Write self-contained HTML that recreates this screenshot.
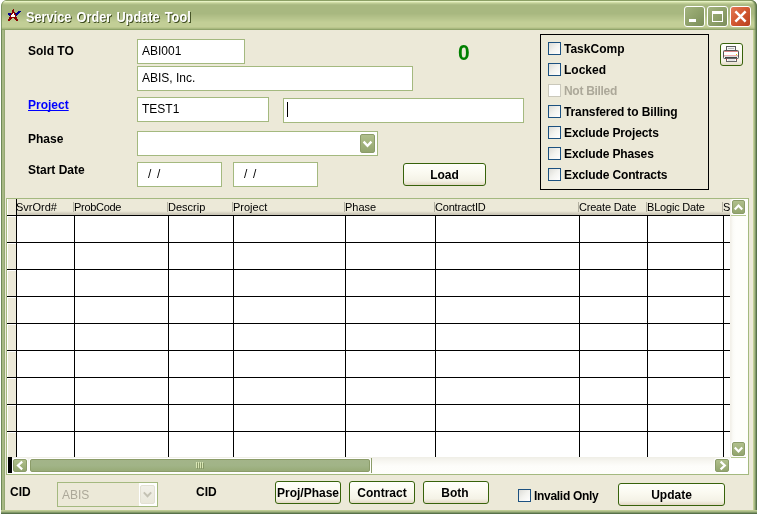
<!DOCTYPE html>
<html>
<head>
<meta charset="utf-8">
<title>Service Order Update Tool</title>
<style>
html,body{margin:0;padding:0;background:#fff;}
body{width:758px;height:514px;overflow:hidden;position:relative;font-family:"Liberation Sans",sans-serif;font-size:11px;color:#000;}
.a{position:absolute;box-sizing:border-box;}
.win{left:1px;top:0;width:756px;height:514px;border-radius:6px 6px 0 0;overflow:hidden;background:#a8b882;}
.title{left:0;top:0;width:756px;height:30px;border-radius:6px 6px 0 0;box-shadow:inset -1px 0 0 0 rgba(88,113,74,0.95),inset -2px 0 0 0 rgba(110,135,85,0.75),inset -3px 0 0 0 rgba(140,160,105,0.5),inset 1px 0 0 0 rgba(110,136,88,0.75);background:linear-gradient(to bottom,#8ca066 0px,#8ca066 1px,#e6f2c4 1px,#e6f2c4 2px,#d0dca6 2px,#d0dca6 3px,#bccb93 3px,#bccb93 4px,#aebd87 4px,#aebd87 5px,#a8b880 5px,#a8b880 6px,#a8b880 6px,#a8b880 7px,#a8b880 7px,#a8b880 8px,#a8b880 8px,#a8b880 9px,#a8b880 9px,#a8b880 10px,#a8b880 10px,#a8b880 11px,#a8b880 11px,#a8b880 12px,#a8b880 12px,#a8b880 13px,#a8b880 13px,#a8b880 14px,#abba82 14px,#abba82 15px,#aebd85 15px,#aebd85 16px,#b1bf87 16px,#b1bf87 17px,#b4c28a 17px,#b4c28a 18px,#b6c48c 18px,#b6c48c 19px,#b9c78f 19px,#b9c78f 20px,#bcc991 20px,#bcc991 21px,#bfcc94 21px,#bfcc94 22px,#c2ce96 22px,#c2ce96 23px,#c2ce96 23px,#c2ce96 24px,#c2ce96 24px,#c2ce96 25px,#c2ce96 25px,#c2ce96 26px,#c2ce96 26px,#c2ce96 27px,#bac68d 27px,#bac68d 28px,#a9b980 28px,#a9b980 29px,#90a36a 29px,#90a36a 30px);}
.ttext{left:25px;top:8px;font-weight:bold;font-size:14px;line-height:18px;color:#fff;text-shadow:1px 1px 0 #3c4a1e;white-space:nowrap;transform-origin:0 0;transform:scaleX(0.912);word-spacing:1.7px;}
.bl{left:0;top:30px;width:4px;height:484px;background:linear-gradient(to right,#6e8858 0,#6e8858 1px,#a7b884 1px,#a7b884 3px,#94a873 3px,#94a873 4px);}
.br{left:752px;top:30px;width:4px;height:484px;background:linear-gradient(to right,#c3d198 0,#c3d198 1px,#a7b884 1px,#a7b884 2px,#819868 2px,#819868 3px,#58714a 3px,#58714a 4px);}
.bb{left:0;top:510px;width:756px;height:4px;background:linear-gradient(to bottom,#bdcb93 0,#bdcb93 1px,#a7b884 1px,#a7b884 2px,#819868 2px,#819868 3px,#58714a 3px,#58714a 4px);}
.client{left:4px;top:30px;width:748px;height:480px;background:#ece9d8;}
.lb{font-weight:bold;font-size:12px;line-height:14px;white-space:nowrap;}
.fld{background:#fff;border:1px solid #a4b97f;font-size:12px;line-height:14px;white-space:nowrap;overflow:hidden;}
.fld span{position:absolute;left:4px;top:4px;}
.btn{border:1px solid #37620a;border-radius:3px;background:linear-gradient(to bottom,#fffffb 0,#fbfaf1 40%,#f4f2e6 80%,#ece6d6 90%,#e2d8c4 100%);font-weight:bold;font-size:12px;line-height:14px;text-align:center;white-space:nowrap;}
.cb{width:13px;height:13px;border:1px solid #1c5180;background:linear-gradient(135deg,#dcdcd7 0,#f3f3ef 50%,#ffffff 100%);}
.cbd{width:13px;height:13px;border:1px solid #cac8bb;background:#fff;}
.sbtn{border:1px solid #8b9c69;border-radius:2px;background:linear-gradient(to bottom,#b0bf8c 0,#a3b47e 45%,#93a56f 100%);box-shadow:0 0 0 1px #fff;}
.sthumb{border:1px solid #8b9c69;border-radius:2px;background:linear-gradient(to bottom,#a3b489 0,#a1b487 50%,#98ab78 100%);box-shadow:0 0 0 1px #fff;}
.tb{width:21px;height:21px;border:1px solid #fff;border-radius:3px;background:linear-gradient(135deg,#a3b37f 0,#93a56e 40%,#7c8e5a 100%);}
.tbx{background:linear-gradient(135deg,#e27a58 0,#d45a32 45%,#b8401e 100%);}
</style>
</head>
<body>
<div class="a win" style="will-change:transform;">
 <div class="a title"></div>
 <div class="a bl"></div><div class="a br"></div><div class="a bb"></div>
 <div class="a ttext" id="tt">Service Order Update Tool</div>
 <div class="a client" id="client"></div>
</div>
<div class="a" id="ui" style="left:0;top:0;width:758px;height:514px;will-change:transform;">
<!-- title buttons -->
<div class="a tb" style="left:684px;top:6px;"><div class="a" style="left:4px;top:12px;width:7px;height:3px;background:#fff;"></div></div>
<div class="a tb" style="left:707px;top:6px;"><div class="a" style="left:4px;top:4px;width:11px;height:11px;border:1px solid #fff;border-top-width:3px;"></div></div>
<div class="a tb tbx" style="left:730px;top:6px;"><svg class="a" style="left:0;top:0" width="19" height="19" viewBox="0 0 19 19"><path d="M4.4 4.4 L14.6 14.6 M14.6 4.4 L4.4 14.6" stroke="#fff" stroke-width="2.5" fill="none"/></svg></div>
<!-- icon -->
<svg class="a" style="left:6px;top:7px" width="18" height="16" viewBox="6 7 18 16" shape-rendering="crispEdges"><rect x="13" y="9" width="1" height="1" fill="#8b0000"/><rect x="12" y="10" width="2" height="1" fill="#8b0000"/><rect x="12" y="11" width="2" height="1" fill="#8b0000"/><rect x="18" y="11" width="3" height="1" fill="#00008c"/><rect x="12" y="12" width="3" height="1" fill="#8b0000"/><rect x="17" y="12" width="3" height="1" fill="#00008c"/><rect x="8" y="13" width="3" height="1" fill="#00008c"/><rect x="11" y="13" width="2" height="1" fill="#8b0000"/><rect x="13" y="13" width="1" height="1" fill="#ffffff"/><rect x="14" y="13" width="1" height="1" fill="#8b0000"/><rect x="15" y="13" width="4" height="1" fill="#00008c"/><rect x="8" y="14" width="3" height="1" fill="#00008c"/><rect x="11" y="14" width="1" height="1" fill="#8b0000"/><rect x="12" y="14" width="2" height="1" fill="#ffffff"/><rect x="14" y="14" width="2" height="1" fill="#8b0000"/><rect x="16" y="14" width="2" height="1" fill="#00008c"/><rect x="9" y="15" width="1" height="1" fill="#00008c"/><rect x="10" y="15" width="1" height="1" fill="#8b0000"/><rect x="11" y="15" width="4" height="1" fill="#ffffff"/><rect x="15" y="15" width="1" height="1" fill="#8b0000"/><rect x="16" y="15" width="1" height="1" fill="#00008c"/><rect x="10" y="16" width="1" height="1" fill="#8b0000"/><rect x="11" y="16" width="4" height="1" fill="#ffffff"/><rect x="15" y="16" width="1" height="1" fill="#8b0000"/><rect x="9" y="17" width="8" height="1" fill="#8b0000"/><rect x="9" y="18" width="3" height="1" fill="#8b0000"/><rect x="14" y="18" width="3" height="1" fill="#8b0000"/><rect x="8" y="19" width="3" height="1" fill="#8b0000"/><rect x="15" y="19" width="3" height="1" fill="#8b0000"/><rect x="8" y="20" width="2" height="1" fill="#8b0000"/><rect x="16" y="20" width="2" height="1" fill="#8b0000"/></svg>
<!-- labels -->
<div class="a lb" style="left:28px;top:44px;">Sold TO</div>
<div class="a lb" style="left:28px;top:98px;color:#0000ff;text-decoration:underline;text-decoration-skip-ink:none;">Project</div>
<div class="a lb" style="left:28px;top:132px;">Phase</div>
<div class="a lb" style="left:28px;top:163px;">Start Date</div>
<!-- fields -->
<div class="a fld" style="left:137px;top:39px;width:108px;height:25px;"><span>ABI001</span></div>
<div class="a fld" style="left:137px;top:66px;width:276px;height:25px;"><span>ABIS, Inc.</span></div>
<div class="a fld" style="left:137px;top:97px;width:132px;height:25px;"><span>TEST1</span></div>
<div class="a fld" style="left:283px;top:98px;width:241px;height:25px;"><div class="a" style="left:3px;top:3px;width:1px;height:15px;background:#000;"></div></div>
<div class="a fld" style="left:137px;top:131px;width:241px;height:25px;"><div class="a sbtn" style="left:222px;top:2px;width:15px;height:19px;box-shadow:none;border-radius:2px;"><svg class="a" style="left:0;top:0" width="13" height="17" viewBox="0 0 13 17"><path d="M2.6 6.6 L6.5 10.8 L10.4 6.6" stroke="#fff" stroke-width="2.3" fill="none"/></svg></div></div>
<div class="a fld" style="left:137px;top:162px;width:85px;height:25px;"><span style="left:10px;">/</span><span style="left:19px;">/</span></div>
<div class="a fld" style="left:233px;top:162px;width:85px;height:25px;"><span style="left:10px;">/</span><span style="left:19px;">/</span></div>
<div class="a" style="left:458px;top:40px;font-weight:bold;font-size:21px;line-height:24px;transform:scaleY(1.07);transform-origin:0 5px;color:#008000;">0</div>
<div class="a btn" style="left:403px;top:163px;width:83px;height:23px;padding-top:4px;">Load</div>
<!-- group box -->
<div class="a" style="left:540px;top:34px;width:169px;height:156px;border:1px solid #000;"></div>
<!-- checkboxes -->
<div class="a cb" style="left:548px;top:42px;"></div><div class="a lb" style="left:564px;top:42px;letter-spacing:0;">TaskComp</div>
<div class="a cb" style="left:548px;top:63px;"></div><div class="a lb" style="left:564px;top:63px;letter-spacing:0;">Locked</div>
<div class="a cbd" style="left:548px;top:84px;"></div><div class="a lb" style="left:564px;top:84px;color:#aca899;letter-spacing:-0.3px;">Not Billed</div>
<div class="a cb" style="left:548px;top:105px;"></div><div class="a lb" style="left:564px;top:105px;letter-spacing:-0.12px;">Transfered to Billing</div>
<div class="a cb" style="left:548px;top:126px;"></div><div class="a lb" style="left:564px;top:126px;letter-spacing:-0.12px;">Exclude Projects</div>
<div class="a cb" style="left:548px;top:147px;"></div><div class="a lb" style="left:564px;top:147px;letter-spacing:-0.12px;">Exclude Phases</div>
<div class="a cb" style="left:548px;top:168px;"></div><div class="a lb" style="left:564px;top:168px;letter-spacing:-0.12px;">Exclude Contracts</div>
<div class="a btn" id="prn" style="left:720px;top:43px;width:23px;height:23px;"><svg class="a" style="left:-1px;top:-1px" width="23" height="23" viewBox="720 43 23 23">
<rect x="726.5" y="46.5" width="9" height="4.5" fill="#f4f4f4" stroke="#5a5a5a" stroke-width="1"/>
<rect x="728" y="48" width="6" height="1" fill="#b8b8b8"/>
<rect x="723.5" y="50.5" width="15" height="8" rx="1" fill="#f6f6f6" stroke="#555" stroke-width="1"/>
<rect x="724" y="51" width="14" height="1" fill="#d88"/>
<rect x="724" y="52" width="14" height="3" fill="#fff"/>
<rect x="724" y="55" width="14" height="1" fill="#f0b0b0"/>
<rect x="724" y="56" width="14" height="1" fill="#ddd"/>
<rect x="725" y="57" width="12" height="1" fill="#444"/>
<rect x="736" y="54" width="1" height="1" fill="#e8c800"/>
<rect x="726.5" y="58.5" width="10" height="3" fill="#fff" stroke="#666" stroke-width="1"/>
<rect x="728" y="59.5" width="7" height="1" fill="#ccc"/>
<rect x="726" y="59" width="1" height="1" fill="#a33"/><rect x="736" y="59" width="1" height="1" fill="#a33"/>
</svg></div>
<!-- grid -->
<div class="a" id="grid" style="left:6px;top:198px;width:743px;height:277px;border:1px solid #a4b97f;background:#fff;overflow:hidden;">
<div class="a" style="left:0;top:0;width:723px;height:16px;background:linear-gradient(to bottom,#ece9d8 0,#ece9d8 12px,#e2decd 13px,#d6d2c2 14px,#cbc7b8 15px,#cbc7b8 16px);"></div>
<div class="a" style="left:0;top:0;width:9px;height:258px;background:#ece9d8;border-left:1px solid #fff;"></div>
<div class="a" style="left:9px;top:2px;font-size:11px;line-height:13px;white-space:nowrap;">SvrOrd#</div><div class="a" style="left:9px;top:0;width:1px;height:258px;background:#000;"></div>
<div class="a" style="left:67px;top:2px;font-size:11px;line-height:13px;white-space:nowrap;letter-spacing:-0.3px;">ProbCode</div><div class="a" style="left:66px;top:3px;width:1px;height:10px;background:#b5b2a2;"></div><div class="a" style="left:67px;top:17px;width:1px;height:241px;background:#000;"></div>
<div class="a" style="left:161px;top:2px;font-size:11px;line-height:13px;white-space:nowrap;">Descrip</div><div class="a" style="left:160px;top:3px;width:1px;height:10px;background:#b5b2a2;"></div><div class="a" style="left:161px;top:17px;width:1px;height:241px;background:#000;"></div>
<div class="a" style="left:226px;top:2px;font-size:11px;line-height:13px;white-space:nowrap;">Project</div><div class="a" style="left:225px;top:3px;width:1px;height:10px;background:#b5b2a2;"></div><div class="a" style="left:226px;top:17px;width:1px;height:241px;background:#000;"></div>
<div class="a" style="left:338px;top:2px;font-size:11px;line-height:13px;white-space:nowrap;">Phase</div><div class="a" style="left:337px;top:3px;width:1px;height:10px;background:#b5b2a2;"></div><div class="a" style="left:338px;top:17px;width:1px;height:241px;background:#000;"></div>
<div class="a" style="left:428px;top:2px;font-size:11px;line-height:13px;white-space:nowrap;letter-spacing:-0.2px;">ContractID</div><div class="a" style="left:427px;top:3px;width:1px;height:10px;background:#b5b2a2;"></div><div class="a" style="left:428px;top:17px;width:1px;height:241px;background:#000;"></div>
<div class="a" style="left:572px;top:2px;font-size:11px;line-height:13px;white-space:nowrap;letter-spacing:-0.2px;">Create Date</div><div class="a" style="left:571px;top:3px;width:1px;height:10px;background:#b5b2a2;"></div><div class="a" style="left:572px;top:17px;width:1px;height:241px;background:#000;"></div>
<div class="a" style="left:640px;top:2px;font-size:11px;line-height:13px;white-space:nowrap;letter-spacing:-0.2px;">BLogic Date</div><div class="a" style="left:639px;top:3px;width:1px;height:10px;background:#b5b2a2;"></div><div class="a" style="left:640px;top:17px;width:1px;height:241px;background:#000;"></div>
<div class="a" style="left:716px;top:2px;font-size:11px;line-height:13px;white-space:nowrap;">S</div><div class="a" style="left:715px;top:3px;width:1px;height:10px;background:#b5b2a2;"></div><div class="a" style="left:716px;top:17px;width:1px;height:241px;background:#000;"></div>
<div class="a" style="left:0;top:16px;width:723px;height:1px;background:#000;"></div><div class="a" style="left:0;top:17px;width:9px;height:1px;background:#fff;"></div>
<div class="a" style="left:0;top:43px;width:723px;height:1px;background:#000;"></div><div class="a" style="left:0;top:44px;width:9px;height:1px;background:#fff;"></div>
<div class="a" style="left:0;top:70px;width:723px;height:1px;background:#000;"></div><div class="a" style="left:0;top:71px;width:9px;height:1px;background:#fff;"></div>
<div class="a" style="left:0;top:97px;width:723px;height:1px;background:#000;"></div><div class="a" style="left:0;top:98px;width:9px;height:1px;background:#fff;"></div>
<div class="a" style="left:0;top:124px;width:723px;height:1px;background:#000;"></div><div class="a" style="left:0;top:125px;width:9px;height:1px;background:#fff;"></div>
<div class="a" style="left:0;top:151px;width:723px;height:1px;background:#000;"></div><div class="a" style="left:0;top:152px;width:9px;height:1px;background:#fff;"></div>
<div class="a" style="left:0;top:178px;width:723px;height:1px;background:#000;"></div><div class="a" style="left:0;top:179px;width:9px;height:1px;background:#fff;"></div>
<div class="a" style="left:0;top:205px;width:723px;height:1px;background:#000;"></div><div class="a" style="left:0;top:206px;width:9px;height:1px;background:#fff;"></div>
<div class="a" style="left:0;top:232px;width:723px;height:1px;background:#000;"></div><div class="a" style="left:0;top:233px;width:9px;height:1px;background:#fff;"></div>
<div class="a" style="left:723px;top:0;width:18px;height:258px;background:linear-gradient(to right,#f3f1ea 0,#f3f1ea 1px,#fbfbf7 3px,#fefefb 6px,#fefefb 100%);"></div>
<div class="a sbtn" style="left:725px;top:1px;width:13px;height:14px;"><svg class="a" style="left:0;top:0" width="11" height="12" viewBox="0 0 11 12"><path d="M1.8 8.6 L5.5 4.6 L9.2 8.6" stroke="#fff" stroke-width="2.2" fill="none" stroke-linejoin="miter"/></svg></div>
<div class="a" style="left:724px;top:16px;width:15px;height:1px;background:#b5c891;"></div>
<div class="a sbtn" style="left:725px;top:243px;width:13px;height:14px;"><svg class="a" style="left:0;top:0" width="11" height="12" viewBox="0 0 11 12"><path d="M1.8 4.4 L5.5 8.4 L9.2 4.4" stroke="#fff" stroke-width="2.2" fill="none" stroke-linejoin="miter"/></svg></div>
<div class="a" style="left:0;top:258px;width:723px;height:17px;background:linear-gradient(to bottom,#efeee6 0,#f7f6f1 4px,#fdfdfa 9px,#fefefb 100%);"></div>
<div class="a" style="left:723px;top:258px;width:18px;height:17px;background:#fff;"></div>
<div class="a" style="left:724px;top:258px;width:15px;height:1px;background:#b5c891;"></div>
<div class="a" style="left:1px;top:258px;width:4px;height:16px;background:#000;"></div>
<div class="a sbtn" style="left:6px;top:260px;width:14px;height:13px;"><svg class="a" style="left:0;top:0" width="12" height="11" viewBox="0 0 12 11"><path d="M8.2 1.6 L4 5.5 L8.2 9.4" stroke="#fff" stroke-width="2.2" fill="none" stroke-linejoin="miter"/></svg></div>
<div class="a sbtn" style="left:708px;top:260px;width:14px;height:13px;"><svg class="a" style="left:0;top:0" width="12" height="11" viewBox="0 0 12 11"><path d="M4.6 1.6 L8.8 5.5 L4.6 9.4" stroke="#fff" stroke-width="2.2" fill="none" stroke-linejoin="miter"/></svg></div>
<div class="a sthumb" style="left:23px;top:260px;width:340px;height:13px;"><div class="a" style="left:165px;top:2px;width:1px;height:6px;background:#d9e6b4;"></div><div class="a" style="left:166px;top:3px;width:1px;height:6px;background:#879867;"></div><div class="a" style="left:167px;top:2px;width:1px;height:6px;background:#d9e6b4;"></div><div class="a" style="left:168px;top:3px;width:1px;height:6px;background:#879867;"></div><div class="a" style="left:169px;top:2px;width:1px;height:6px;background:#d9e6b4;"></div><div class="a" style="left:170px;top:3px;width:1px;height:6px;background:#879867;"></div><div class="a" style="left:171px;top:2px;width:1px;height:6px;background:#d9e6b4;"></div><div class="a" style="left:172px;top:3px;width:1px;height:6px;background:#879867;"></div></div>
<div class="a" style="left:364px;top:259px;width:1px;height:15px;background:#8b9c69;"></div>
</div>
<!-- bottom -->
<div class="a lb" style="left:10px;top:485px;">CID</div>
<div class="a" style="left:57px;top:482px;width:101px;height:25px;border:1px solid #a4b97f;background:#ece9d8;"><div class="a" style="left:4px;top:5px;font-size:12px;line-height:14px;color:#aca899;">ABIS</div><div class="a" style="left:81px;top:0;width:18px;height:23px;background:#fff;"></div><div class="a" style="left:82px;top:2px;width:15px;height:19px;border:1px solid #e3e1d4;border-radius:2px;background:linear-gradient(to bottom,#f1f0e8,#eae8db);"><svg class="a" style="left:0;top:0" width="13" height="17" viewBox="0 0 13 17"><path d="M2.8 6.4 L6.5 10.2 L10.2 6.4" stroke="#c4c2b4" stroke-width="2" fill="none"/></svg></div></div>
<div class="a lb" style="left:196px;top:485px;">CID</div>
<div class="a btn" style="left:275px;top:481px;width:66px;height:23px;padding-top:4px;">Proj/Phase</div>
<div class="a btn" style="left:349px;top:481px;width:66px;height:23px;padding-top:4px;">Contract</div>
<div class="a btn" style="left:423px;top:481px;width:66px;height:23px;padding-top:4px;padding-right:2px;">Both</div>
<div class="a cb" style="left:518px;top:489px;"></div>
<div class="a lb" style="left:534px;top:489px;letter-spacing:-0.3px;">Invalid Only</div>
<div class="a btn" style="left:618px;top:483px;width:107px;height:23px;padding-top:4px;">Update</div>
</div>
</body>
</html>
